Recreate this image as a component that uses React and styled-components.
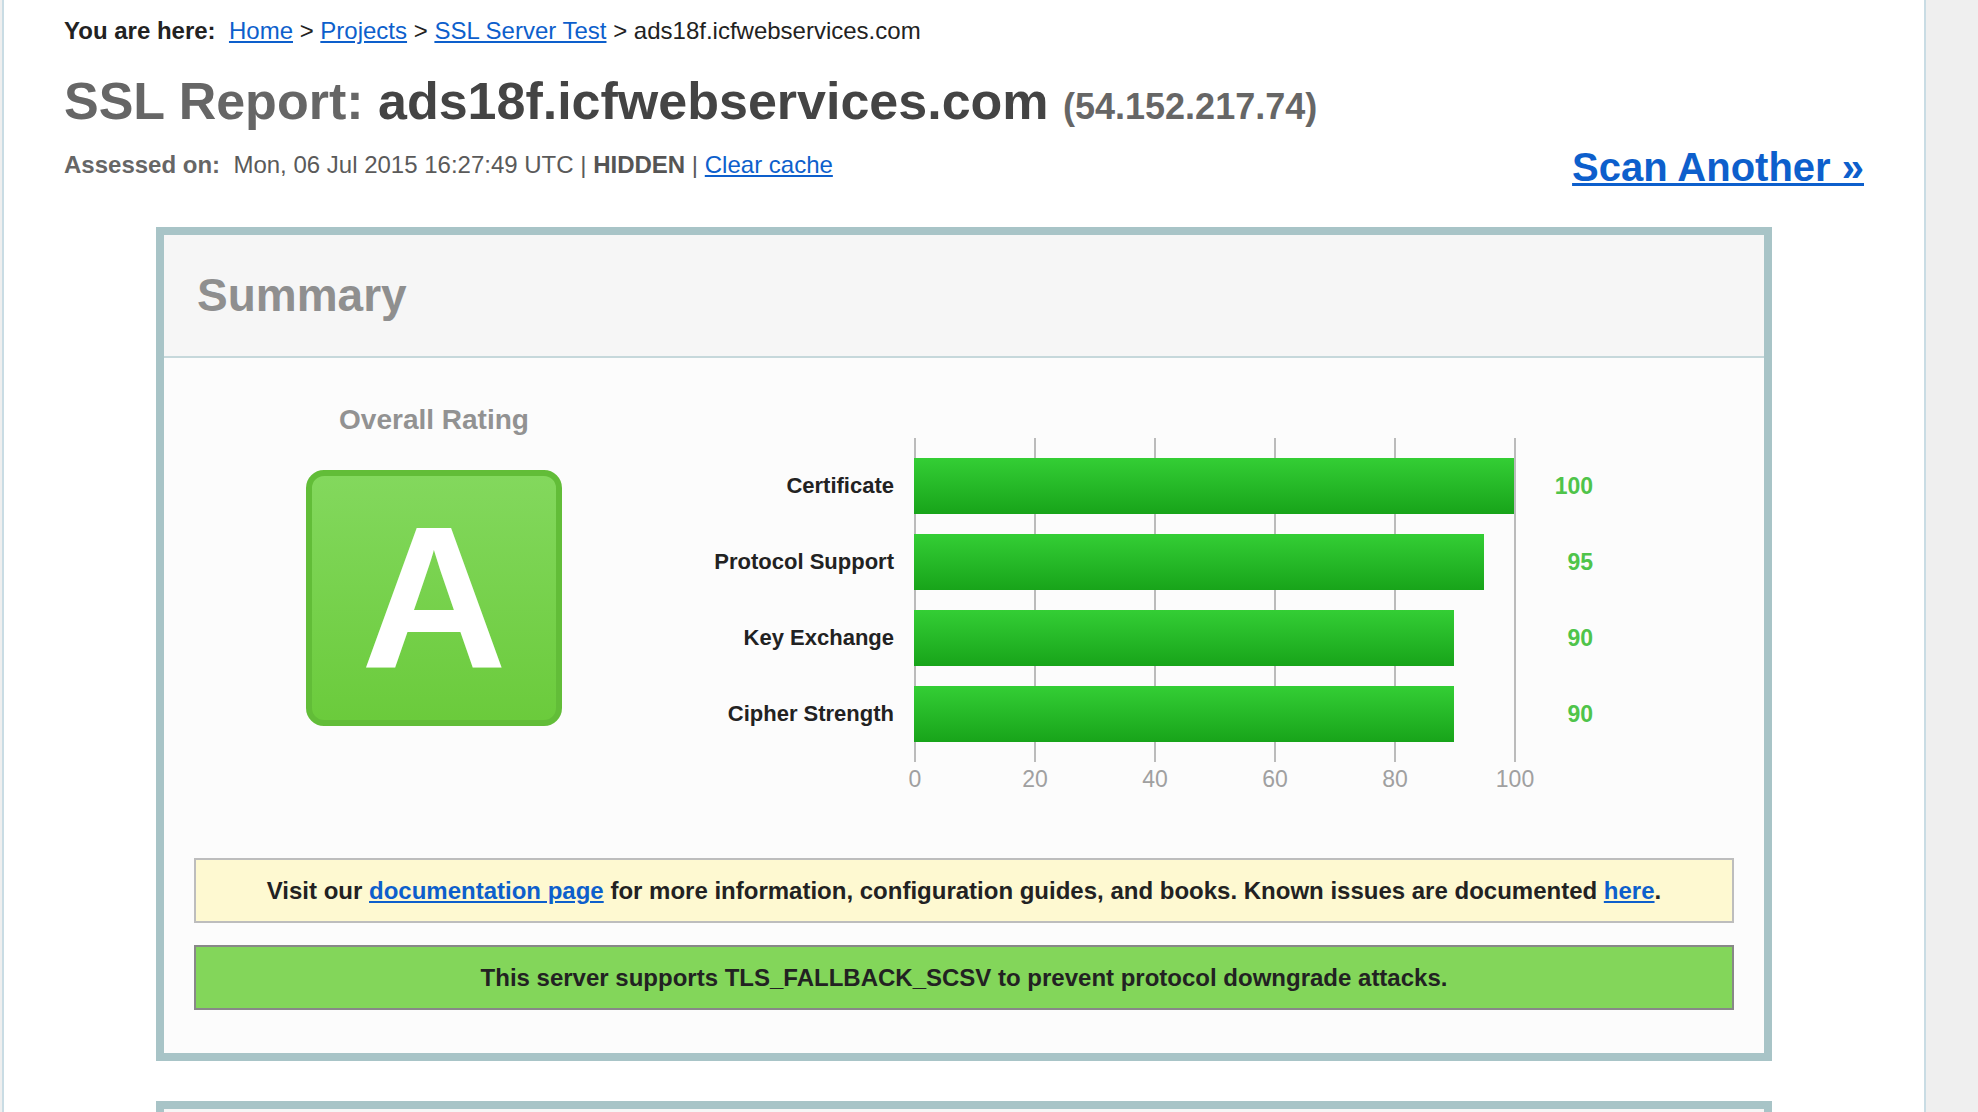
import styled, { createGlobalStyle } from "styled-components"

const scores = [
    { label: "Certificate", value: 100 },
    { label: "Protocol Support", value: 95 },
    { label: "Key Exchange", value: 90 },
    { label: "Cipher Strength", value: 90 },
]
const ticks = [0, 20, 40, 60, 80, 100]
const PX_PER_POINT = 6

const App = () => {
    return (
        <>
            <GlobalStyle />
            <StPage>
                <StCrumbs>
                    <StCrumbLabel>You are here:</StCrumbLabel>{"\u00a0 "}
                    <StLink href="#">Home</StLink> &gt; <StLink href="#">Projects</StLink> &gt;{" "}
                    <StLink href="#">SSL Server Test</StLink> &gt; ads18f.icfwebservices.com
                </StCrumbs>
                <StTitle>
                    SSL Report: <StHost>ads18f.icfwebservices.com</StHost> <StIp>(54.152.217.74)</StIp>
                </StTitle>
                <StMetaRow>
                    <StAssessed>
                        <StMetaLabel>Assessed on:</StMetaLabel>{"\u00a0 "}Mon, 06 Jul 2015 16:27:49 UTC |{" "}
                        <StHidden>HIDDEN</StHidden> | <StLink href="#">Clear cache</StLink>
                    </StAssessed>
                    <StScanLink href="#">Scan Another »</StScanLink>
                </StMetaRow>

                <StSection>
                    <StSectionHeader>Summary</StSectionHeader>
                    <StSectionBody>
                        <StSummaryRow>
                            <StRating>
                                <StRatingTitle>Overall Rating</StRatingTitle>
                                <StGrade>A</StGrade>
                            </StRating>
                            <StChart>
                                <StChartMain>
                                    <StColumn>
                                        {scores.map((s) => (
                                            <StBarLabel key={s.label}>{s.label}</StBarLabel>
                                        ))}
                                    </StColumn>
                                    <StPlot>
                                        <StColumn>
                                            {scores.map((s) => (
                                                <StBar key={s.label} style={{ width: s.value * PX_PER_POINT }} />
                                            ))}
                                        </StColumn>
                                    </StPlot>
                                    <StValueColumn>
                                        {scores.map((s) => (
                                            <StBarValue key={s.label}>{s.value}</StBarValue>
                                        ))}
                                    </StValueColumn>
                                </StChartMain>
                                <StTicks>
                                    {ticks.map((t) => (
                                        <StTick key={t}>{t}</StTick>
                                    ))}
                                </StTicks>
                            </StChart>
                        </StSummaryRow>

                        <StNotice $tone="info">
                            Visit our <StLink href="#">documentation page</StLink> for more information, configuration
                            guides, and books. Known issues are documented <StLink href="#">here</StLink>.
                        </StNotice>
                        <StNotice $tone="good">
                            This server supports TLS_FALLBACK_SCSV to prevent protocol downgrade attacks.
                        </StNotice>
                    </StSectionBody>
                </StSection>

                {/* next report section, only its top edge is on screen */}
                <StSection $next>
                    <StSectionHeader />
                </StSection>
            </StPage>
        </>
    )
}

export default App

const GlobalStyle = createGlobalStyle`
    *, *::before, *::after {
        box-sizing: border-box;
    }
    body {
        margin: 0;
        background: #efefef;
        font-family: "Liberation Sans", Arial, Helvetica, sans-serif;
        color: #222;
    }
`
const StPage = styled.div`
    margin-left: 2px;
    width: 1924px;
    min-height: 100vh;
    padding: 17px 60px 40px;
    background: #fff;
    border-left: 2px solid #c9dce4;
    border-right: 2px solid #c9dce4;
`
const StLink = styled.a`
    color: #0d5fcc;
    text-decoration: underline;
`
const StCrumbs = styled.div`
    font-size: 24px;
    line-height: 28px;
    color: #222;
    white-space: nowrap;
`
const StCrumbLabel = styled.b`
    font-weight: bold;
`
const StTitle = styled.h1`
    margin: 26px 0 0;
    font-size: 52px;
    line-height: 60px;
    font-weight: bold;
    color: #666;
    white-space: nowrap;
`
const StHost = styled.span`
    color: #444;
`
const StIp = styled.span`
    font-size: 36px;
    color: #666;
`
const StMetaRow = styled.div`
    display: flex;
    justify-content: space-between;
    align-items: flex-start;
    margin-top: 7px;
`
const StAssessed = styled.div`
    padding-top: 7px;
    font-size: 24px;
    line-height: 28px;
    color: #5a5a5a;
    white-space: nowrap;
`
const StMetaLabel = styled.b`
    color: #666;
`
const StHidden = styled.b`
    color: #555;
`
const StScanLink = styled.a`
    font-size: 40px;
    line-height: 46px;
    font-weight: bold;
    color: #0d5fcc;
    text-decoration: underline;
    text-decoration-thickness: 3px;
    white-space: nowrap;
`
const StSection = styled.section`
    width: 1616px;
    margin: ${(p) => (p.$next ? "40px" : "37px")} auto 0;
    border: 8px solid #a8c4c7;
    background: #fcfcfc;
`
const StSectionHeader = styled.h2`
    margin: 0;
    min-height: 123px;
    padding: 33px 33px 34px;
    font-size: 46px;
    line-height: 54px;
    font-weight: bold;
    color: #8f8f8f;
    background: #f6f6f6;
    border-bottom: 2px solid #c6d8db;
`
const StSectionBody = styled.div`
    padding: 47px 0 43px;
    background: #fcfcfc;
`
const StSummaryRow = styled.div`
    display: flex;
    align-items: flex-start;
`
const StRating = styled.div`
    width: 540px;
    display: flex;
    flex-direction: column;
    align-items: center;
`
const StRatingTitle = styled.div`
    font-size: 28px;
    line-height: 30px;
    font-weight: bold;
    color: #929292;
`
const StGrade = styled.div`
    width: 256px;
    height: 256px;
    margin-top: 35px;
    display: flex;
    align-items: center;
    justify-content: center;
    border: 6px solid #62bd38;
    border-radius: 18px;
    background: linear-gradient(#83d85d, #6bcb3c);
    color: #fff;
    font-size: 202px;
    line-height: 1;
    font-weight: bold;
`
const StChart = styled.div`
    margin-top: 33px;
`
const StChartMain = styled.div`
    display: flex;
    align-items: stretch;
`
const StColumn = styled.div`
    display: flex;
    flex-direction: column;
    gap: 20px;
    padding: 20px 0;
`
const StBarLabel = styled.div`
    width: 210px;
    height: 56px;
    padding-right: 20px;
    display: flex;
    align-items: center;
    justify-content: flex-end;
    font-size: 22px;
    font-weight: bold;
    color: #222;
    white-space: nowrap;
`
const StPlot = styled.div`
    width: 602px;
    height: 324px;
    background: repeating-linear-gradient(to right, #bbb 0 2px, transparent 2px 120px);
`
const StBar = styled.div`
    height: 56px;
    background: linear-gradient(#34ce35, #18a41a);
`
const StValueColumn = styled(StColumn)`
    width: 77px;
`
const StBarValue = styled.div`
    height: 56px;
    display: flex;
    align-items: center;
    justify-content: flex-end;
    font-size: 23px;
    font-weight: bold;
    color: #4fc44a;
`
const StTicks = styled.div`
    display: flex;
    margin: 2px 0 0 151px;
`
const StTick = styled.div`
    width: 120px;
    height: 30px;
    line-height: 30px;
    text-align: center;
    font-size: 23px;
    color: #a0a0a0;
`
const StNotice = styled.div`
    margin: ${(p) => (p.$tone === "info" ? "64px" : "22px")} 30px 0;
    padding: 17px 20px;
    font-size: 24px;
    line-height: 27px;
    font-weight: bold;
    text-align: center;
    color: #222;
    background: ${(p) => (p.$tone === "info" ? "#fef9d1" : "#83d65a")};
    border: 2px solid ${(p) => (p.$tone === "info" ? "#bdbdbd" : "#888")};
`
